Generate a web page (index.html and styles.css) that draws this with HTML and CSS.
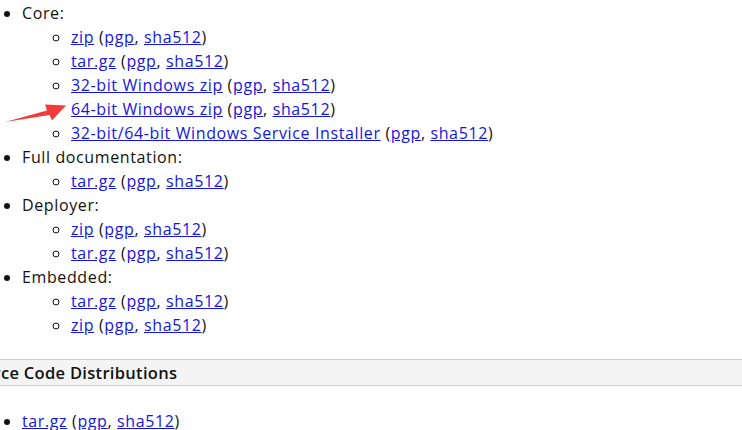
FILE: index.html
```html
<!DOCTYPE html>
<html>
<head>
<meta charset="utf-8">
<link rel="stylesheet" href="styles.css">
</head>
<body>
<div class="page">
  <ul class="dist">
    <li>Core:
      <ul>
        <li><a href="#">zip</a> (<a href="#">pgp</a>, <a href="#">sha512</a>)</li>
        <li><a href="#">tar.gz</a> (<a href="#">pgp</a>, <a href="#">sha512</a>)</li>
        <li><a href="#">32-bit Windows zip</a> (<a href="#">pgp</a>, <a href="#">sha512</a>)</li>
        <li class="nomark"><a href="#">64-bit Windows zip</a> (<a href="#">pgp</a>, <a href="#">sha512</a>)</li>
        <li><a href="#">32-bit/64-bit Windows Service Installer</a> (<a href="#">pgp</a>, <a href="#">sha512</a>)</li>
      </ul>
    </li>
    <li>Full documentation:
      <ul>
        <li><a href="#">tar.gz</a> (<a href="#">pgp</a>, <a href="#">sha512</a>)</li>
      </ul>
    </li>
    <li>Deployer:
      <ul>
        <li><a href="#">zip</a> (<a href="#">pgp</a>, <a href="#">sha512</a>)</li>
        <li><a href="#">tar.gz</a> (<a href="#">pgp</a>, <a href="#">sha512</a>)</li>
      </ul>
    </li>
    <li>Embedded:
      <ul>
        <li><a href="#">tar.gz</a> (<a href="#">pgp</a>, <a href="#">sha512</a>)</li>
        <li><a href="#">zip</a> (<a href="#">pgp</a>, <a href="#">sha512</a>)</li>
      </ul>
    </li>
  </ul>
  <h3 class="section"><span>Source Code Distributions</span></h3>
  <ul class="dist src">
    <li><a href="#">tar.gz</a> (<a href="#">pgp</a>, <a href="#">sha512</a>)</li>
  </ul>
</div>
<svg class="arrow" width="70" height="30" viewBox="0 96 70 30">
  <polygon points="5,122 47,110.5 45,104.5 66,105.5 52,120.5 49.5,115" fill="#f23b3b"/>
</svg>
</body>
</html>
```

FILE: styles.css
```css
html, body {
  margin: 0;
  padding: 0;
  background: #fff;
}
body {
  font-family: "Open Sans", "Liberation Sans", sans-serif;
  font-size: 16px;
  line-height: 24px;
  letter-spacing: 0.62px;
  color: #111;
  overflow: hidden;
}
.page {
  padding-top: 1px;
}
a {
  color: #1515e0;
  text-decoration: underline;
}
ul {
  margin: 0;
  padding: 0;
}
.dist {
  padding-left: 22px;
  list-style: disc;
}
.dist ul {
  padding-left: 49px;
  list-style: circle;
}
.nomark {
  list-style: none;
}
.section {
  margin: 22px 0 0 0;
  background: #f4f4f4;
  border-top: 1px solid #cccccc;
  border-bottom: 1px solid #cccccc;
  font-size: 16.5px;
  font-weight: 600;
  letter-spacing: 0.3px;
  line-height: 25px;
  white-space: nowrap;
  overflow: hidden;
}
.section span {
  display: block;
  margin-left: -37px;
}
.src {
  margin-top: 23px;
}
.arrow {
  position: absolute;
  left: 0;
  top: 96px;
}
```
